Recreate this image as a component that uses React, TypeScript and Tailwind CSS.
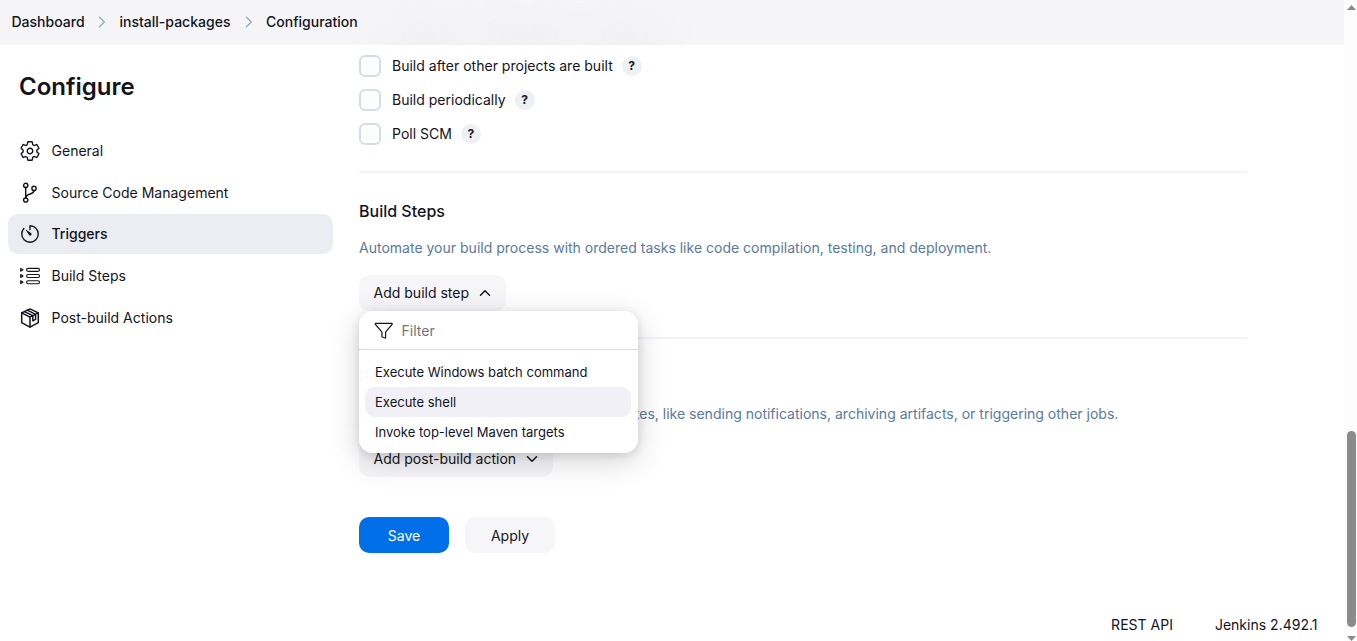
import React from "react";
import { IoSettingsOutline, IoTimerOutline, IoFunnelOutline } from "react-icons/io5";

function BranchIcon() {
  return (
    <svg viewBox="0 0 22 22" className="size-[22px]" fill="none" stroke="currentColor" strokeWidth="1.45" strokeLinecap="round" strokeLinejoin="round">
      <circle cx="6.7" cy="3.4" r="2.1" />
      <circle cx="6.7" cy="18" r="2.1" />
      <circle cx="15" cy="6.4" r="2.1" />
      <path d="M6.7 5.5V15.9M15 8.5C15 13.2 7.6 10.6 6.7 15.6" />
    </svg>
  );
}

function StepsIcon() {
  return (
    <svg viewBox="0 0 22 22" className="size-[22px]" fill="none" stroke="currentColor" strokeWidth="1.15" strokeLinejoin="round">
      {[4.8, 11, 17.2].map((y) => (
        <g key={y}>
          <rect x="7.6" y={y - 1.5} width="12.9" height="3" rx="1.5" />
          <path d={`M1.7 ${y - 1.4}L4 ${y}L1.7 ${y + 1.4}Z`} />
        </g>
      ))}
    </svg>
  );
}

function PackageIcon() {
  return (
    <svg viewBox="0 0 22 22" className="size-[22px]" fill="none" stroke="currentColor" strokeWidth="1.5" strokeLinejoin="round" strokeLinecap="round">
      <path d="M11 1.9L19.3 5.9V15.6L11 20.1L2.7 15.6V5.9Z" />
      <path d="M2.7 5.9L11 10.1L19.3 5.9M11 10.1V20.1M5.5 4.6L13.8 8.7V13.8L16.6 12.3V7.3L8.3 3.2" />
    </svg>
  );
}

function Chevron({ className }: { className: string }) {
  return (
    <svg viewBox="0 0 12 12" className={className} fill="none" stroke="currentColor" strokeWidth="1.5" strokeLinecap="round" strokeLinejoin="round">
      <path d="M1.5 8.2L6 3.8L10.5 8.2" />
    </svg>
  );
}

function CrumbArrow() {
  return (
    <svg viewBox="0 0 8 12" className="h-3 w-2 text-[#98acc6]" fill="none" stroke="currentColor" strokeWidth="1.4" strokeLinecap="round" strokeLinejoin="round">
      <path d="M1.5 1.2L6.3 6L1.5 10.8" />
    </svg>
  );
}

const navItems = [
  { label: "General", icon: <IoSettingsOutline className="size-[22px]" /> },
  { label: "Source Code Management", icon: <BranchIcon /> },
  { label: "Triggers", icon: <IoTimerOutline className="size-[22px]" />, active: true },
  { label: "Build Steps", icon: <StepsIcon /> },
  { label: "Post-build Actions", icon: <PackageIcon /> },
];

const triggers = ["Build after other projects are built", "Build periodically", "Poll SCM"];
const steps = ["Execute Windows batch command", "Execute shell", "Invoke top-level Maven targets"];

function Header() {
  return (
    <header className="relative flex h-[45px] shrink-0 items-center overflow-hidden bg-[#f5f5f8] pb-px pl-[11.5px] font-medium">
      <div className="absolute left-[395px] top-8 flex gap-[30px] blur-lg">
        <div className="h-4 w-[60px] bg-[#ececf0]" />
        <div className="h-4 w-[80px] bg-[#ececf0]" />
        <div className="h-4 w-[60px] bg-[#ececf0]" />
      </div>
      <nav className="relative flex items-center">
        <span className="w-[86.5px]">Dashboard</span>
        <CrumbArrow />
        <span className="ml-[13.5px] w-[112.5px]">install-packages</span>
        <span className="ml-[13px] flex"><CrumbArrow /></span>
        <span className="ml-[13px]">Configuration</span>
      </nav>
    </header>
  );
}

function StepMenu() {
  return (
    <div className="absolute left-0 top-9 z-10 h-[142px] w-[279px] rounded-[14px] bg-white/98 shadow-[0_8px_30px_rgba(0,0,0,0.17),0_2px_10px_rgba(0,0,0,0.12)]">
      <div className="flex h-[39px] items-center border-b border-[#d9d8e4] pl-[15px] pt-px">
        <IoFunnelOutline className="size-[19.5px]" />
        <span className="ml-2 text-[#757575]">Filter</span>
      </div>
      <ul className="flex flex-col pl-1.5 pr-[7px] pt-[7px] text-[13.03px]">
        {steps.map((s, i) => (
          <li key={s} className={`flex h-[30px] items-center rounded-[10px] pl-2.5 ${i === 1 ? "bg-[#f0f0f6]" : ""}`}>{s}</li>
        ))}
      </ul>
    </div>
  );
}

export default function App() {
  return (
    <div className="flex h-[641px] w-[1357px] overflow-hidden bg-white font-['Inter',sans-serif] text-[14.03px] leading-5 whitespace-nowrap text-[#14141f]">
      <div className="flex flex-1 flex-col">
        <Header />
        <div className="flex min-h-0 flex-1">
          <aside className="w-[359px] pl-2 pt-[27px]">
            <h1 className="pl-[11px] text-[24px] font-semibold leading-[30px]">Configure</h1>
            <ul className="mt-[29px] flex w-[325px] flex-col gap-[1.7px]">
              {navItems.map((item) => (
                <li key={item.label} className={`flex h-10 items-center gap-[10.5px] rounded-[10px] pl-[11px] ${item.active ? "bg-[#ecedf3] font-medium" : ""}`}>
                  {item.icon}
                  <span>{item.label}</span>
                </li>
              ))}
            </ul>
          </aside>
          <main className="flex w-[888px] flex-col pt-[10px]">
            <div className="flex flex-col gap-3">
              {triggers.map((t) => (
                <div key={t} className="flex h-[22px] items-center">
                  <span className="size-[22px] rounded-[6px] border-2 border-[#d7dde8] bg-[#fdfdfe]" />
                  <span className="ml-[11px]">{t}</span>
                  <span className="ml-[9px] flex size-5 items-center justify-center rounded-full bg-[#edf1f4] text-[12px] font-bold">?</span>
                </div>
              ))}
            </div>
            <hr className="mt-[26px] border-0 border-b-2 border-[#f2f2f8]" />
            <h2 className="mt-7 text-[16px] font-medium leading-5">Build Steps</h2>
            <p className="mt-[17px] text-[#5b7a9c]">Automate your build process with ordered tasks like code compilation, testing, and deployment.</p>
            <div className="relative mt-[17px] h-9 w-[147px]">
              <button className="flex h-9 w-full items-center rounded-[10px] bg-[#f6f6f9] pl-[14.5px]">
                Add build step
                <Chevron className="ml-2.5 size-3" />
              </button>
              <StepMenu />
            </div>
            <hr className="mt-[26px] border-0 border-b-2 border-[#f2f2f8]" />
            <h2 className="mt-7 text-[16px] font-medium leading-5">Post-build Actions</h2>
            <p className="mt-[17px] text-[#5b7a9c]">Define what happens after a build completes, like sending notifications, archiving artifacts, or triggering other jobs.</p>
            <button className="mt-[17px] flex h-9 w-[194px] shrink-0 items-center rounded-[10px] bg-[#f6f6f9] pl-[14.5px]">
              Add post-build action
              <Chevron className="ml-2.5 size-3 rotate-180" />
            </button>
            <div className="mt-10 flex gap-4">
              <button className="h-9 w-[90px] rounded-[10px] bg-[#006fe8] pt-0.5 text-white">Save</button>
              <button className="h-9 w-[90px] rounded-[10px] bg-[#f6f6f9] pt-0.5">Apply</button>
            </div>
            <footer className="mt-[62px] flex w-[958.5px] justify-end gap-[42px]">
              <span>REST API</span>
              <span>Jenkins 2.492.1</span>
            </footer>
          </main>
        </div>
      </div>
      <div className="flex w-[13px] flex-col items-end bg-[#fcfcfc] pr-px">
        <svg viewBox="0 0 9 5" className="mt-[5px] h-[5px] w-[9px] text-[#8b8b8b]" fill="currentColor"><path d="M4.5 0L9 5H0Z" /></svg>
        <div className="mt-[421px] h-[196px] w-[9px] rounded-full bg-[#8b8b8b]" />
        <svg viewBox="0 0 9 5" className="mt-[9px] h-[5px] w-[9px] text-[#8b8b8b]" fill="currentColor"><path d="M0 0H9L4.5 5Z" /></svg>
      </div>
    </div>
  );
}
